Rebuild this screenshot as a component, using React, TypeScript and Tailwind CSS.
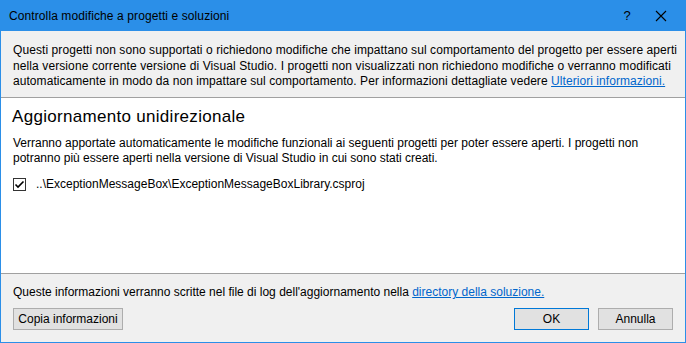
import React, { useState } from "react";

const font = { fontFamily: '"Liberation Sans", Arial, sans-serif' };

const App: React.FC = () => {
  const [checked, setChecked] = useState(true);

  return (
    <div
      className="w-[686px] h-[343px] flex flex-col border border-[#2b8fe8] bg-[#f0f0f0] text-[12px] text-black overflow-hidden"
      style={font}
    >
      {/* Title bar */}
      <div className="h-[30px] flex items-center bg-[#2b8fe8] pl-[8px] shrink-0">
        <span className="flex-1 text-[12px] tracking-[0.1px] text-black">Controlla modifiche a progetti e soluzioni</span>
        <span className="w-[30px] text-center text-[13px] mr-[13px]">?</span>
        <svg className="mr-[18px]" width="12" height="12" viewBox="0 0 12 12">
          <path d="M1 1 L11 11 M11 1 L1 11" stroke="#000" strokeWidth="1.1" />
        </svg>
      </div>

      {/* Info */}
      <div className="h-[67px] shrink-0 border-b border-[#a0a0a0] px-[12px] pt-[12px] leading-[15.5px] whitespace-nowrap">
        <div className="tracking-[0.08px]">
          Questi progetti non sono supportati o richiedono modifiche che impattano sul comportamento del progetto per essere aperti
        </div>
        <div className="tracking-[0.1px]">
          nella versione corrente versione di Visual Studio. I progetti non visualizzati non richiedono modifiche o verranno modificati
        </div>
        <div className="tracking-[0.06px]">
          automaticamente in modo da non impattare sul comportamento. Per informazioni dettagliate vedere{" "}
          <a className="text-[#0066cc] underline">Ulteriori informazioni.</a>
        </div>
      </div>

      {/* Projects */}
      <div className="flex-1 bg-white border-b border-[#a0a0a0] px-[11px] pt-[8px]">
        <h2 className="text-[17px] tracking-[0.3px] leading-[22px] text-black">Aggiornamento unidirezionale</h2>
        <div className="mt-[8px] leading-[15px] pl-[1px] whitespace-nowrap">
          <div>
            Verranno apportate automaticamente le modifiche funzionali ai seguenti progetti per poter essere aperti. I progetti non
          </div>
          <div>potranno più essere aperti nella versione di Visual Studio in cui sono stati creati.</div>
        </div>
        <label className="flex items-center mt-[9px] pl-[1px] gap-[10px]">
          <span
            onClick={() => setChecked(!checked)}
            className="w-[13px] h-[13px] border border-[#333] bg-white flex items-center justify-center"
          >
            {checked && (
              <svg width="11" height="11" viewBox="0 0 11 11">
                <path d="M1.5 5.5 L4 8 L9.5 2.5" stroke="#000" strokeWidth="1.6" fill="none" />
              </svg>
            )}
          </span>
          <span>..\ExceptionMessageBox\ExceptionMessageBoxLibrary.csproj</span>
        </label>
      </div>

      {/* Footer */}
      <div className="h-[68px] shrink-0 px-[12px] pt-[11px]">
        <div className="leading-[15px] whitespace-nowrap">
          Queste informazioni verranno scritte nel file di log dell'aggiornamento nella{" "}
          <a className="text-[#0066cc] underline">directory della soluzione.</a>
        </div>
        <div className="flex items-center mt-[8px]">
          <button className="h-[22px] w-[110px] bg-[#e1e1e1] border border-[#adadad] text-[12px]">
            Copia informazioni
          </button>
          <div className="flex-1" />
          <button className="h-[22px] w-[75px] bg-[#e1e1e1] border border-[#0078d7] text-[12px]">OK</button>
          <button className="h-[22px] w-[75px] ml-[9px] bg-[#e1e1e1] border border-[#adadad] text-[12px]">
            Annulla
          </button>
        </div>
      </div>
    </div>
  );
};

export default App;
